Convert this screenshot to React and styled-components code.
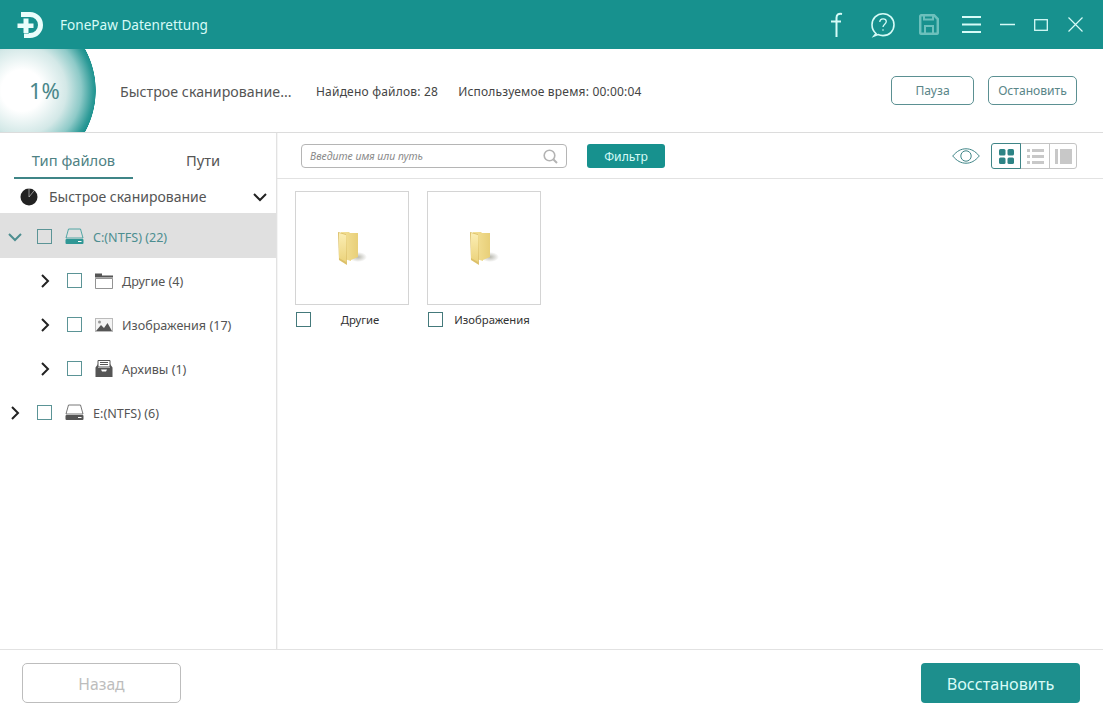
import React from "react";
import styled, { createGlobalStyle } from "styled-components";

const GlobalStyle = createGlobalStyle`
  html, body {
    margin: 0;
    padding: 0;
    background: #fff;
    font-family: "Noto Sans", "Open Sans", sans-serif;
  }
  * { box-sizing: border-box; }
`;

const Window = styled.div`
  width: 1103px;
  height: 723px;
  display: flex;
  flex-direction: column;
  overflow: hidden;
  background: #fff;
`;

const TitleBar = styled.header`
  height: 49px;
  flex: none;
  display: flex;
  align-items: center;
  background: #17918e;
  padding: 0 11px 0 17px;
`;

const AppName = styled.span`
  margin-left: 16px;
  flex: 1;
  color: #d6fbf7;
  font-size: 13.6px;
`;

const Slot = styled.span`
  width: ${(p) => p.$w}px;
  height: 49px;
  display: flex;
  align-items: center;
  justify-content: center;
`;

const StatusBar = styled.section`
  height: 84px;
  flex: none;
  display: flex;
  align-items: center;
  border-bottom: 1px solid #dcdcdc;
`;

const Progress = styled.div`
  width: 97px;
  height: 83px;
  flex: none;
  display: flex;
  align-items: center;
  padding: 0 0 2px 29px;
  color: #4a878a;
  font-size: 22px;
  background:
    radial-gradient(circle 86px at 10px 41.5px, transparent 99.4%, #fff 100%),
    radial-gradient(circle 74px at 22px 41.5px, #fff 0, #fff 28%, #d3e8e7 60%, #8ecac8 80%, #2e9b98 96%, #1f9390 100%);
`;

const ScanTitle = styled.span`
  margin: 2px 0 0 23px;
  width: 196px;
  color: #555;
  font-size: 14.2px;
  letter-spacing: 0.03px;
`;

const Stat = styled.span`
  margin: 2px 20px 0 0;
  color: #444;
  font-size: 12px;
  letter-spacing: 0.2px;
`;

const Spacer = styled.div`
  flex: 1;
`;

const OutlineButton = styled.button`
  width: ${(p) => p.$w}px;
  height: 29px;
  margin-right: ${(p) => p.$mr}px;
  padding: 0;
  background: #fff;
  border: 1px solid #5b9092;
  border-radius: 5px;
  color: #5a8688;
  font: inherit;
  font-size: 12.1px;
`;

const Body = styled.div`
  flex: 1;
  min-height: 0;
  display: flex;
`;

const Sidebar = styled.aside`
  width: 277px;
  flex: none;
  border-right: 1px solid #e2e2e2;
  box-shadow: 1px 0 0 #f5f5f5;
`;

const Tabs = styled.div`
  height: 46px;
  display: flex;
  padding-left: 14px;
`;

const Tab = styled.div`
  width: ${(p) => p.$w}px;
  display: flex;
  align-items: center;
  justify-content: center;
  padding-top: 10px;
  font-size: 14.7px;
  color: ${(p) => (p.$active ? "#4f8284" : "#555")};
  border-bottom: 2px solid ${(p) => (p.$active ? "#3f8587" : "transparent")};
`;

const ScanRow = styled.div`
  height: 34px;
  display: flex;
  align-items: center;
  padding: 1px 8px 0 20px;
  color: #555;
  font-size: 14px;
`;

const ScanLabel = styled.span`
  margin-left: 11px;
  flex: 1;
`;

const TreeRow = styled.div`
  height: ${(p) => p.$h || 44}px;
  display: flex;
  align-items: center;
  padding-top: ${(p) => (p.$selected ? 2 : 1)}px;
  padding-left: ${(p) => 7 + p.$depth * 30}px;
  background: ${(p) => (p.$selected ? "#e0e0e0" : "transparent")};
`;

const TreeLabel = styled.span`
  margin: 2px 0 0 ${(p) => p.$gap}px;
  color: ${(p) => (p.$selected ? "#4d8e90" : "#555")};
  font-size: 12.6px;
`;

const Check = styled.span`
  width: 15px;
  height: 15px;
  flex: none;
  margin: ${(p) => p.$m || "0 13px 0 14px"};
  background: ${(p) => p.$bg || "#fff"};
  border: 1px solid ${(p) => p.$line || "#5b9496"};
`;

const Main = styled.main`
  flex: 1;
  min-width: 0;
  display: flex;
  flex-direction: column;
`;

const Toolbar = styled.div`
  height: 46px;
  flex: none;
  display: flex;
  align-items: center;
  padding: 1px 26px 0 24px;
  border-bottom: 1px solid #e2e2e2;
`;

const Search = styled.div`
  width: 266px;
  height: 24px;
  display: flex;
  align-items: center;
  justify-content: space-between;
  padding: 0 8px;
  border: 1px solid #b5b5b5;
  border-radius: 4px;
  color: #8a8a8a;
  font-size: 10.5px;
  font-style: italic;
`;

const FilterButton = styled.button`
  width: 78px;
  height: 24px;
  margin-left: 20px;
  padding: 0;
  border: none;
  border-radius: 3px;
  background: #17918e;
  color: #d6fbf7;
  font: inherit;
  font-size: 12.2px;
`;

const ViewGroup = styled.div`
  display: flex;
  margin-left: 11px;
  height: 26px;
`;

const ViewButton = styled.span`
  width: ${(p) => p.$w}px;
  display: flex;
  align-items: center;
  justify-content: center;
  border: 1px solid ${(p) => (p.$active ? "#3f8587" : "#c4c4c4")};
  margin-left: ${(p) => (p.$first ? 0 : "-1px")};
  border-radius: ${(p) => p.$radius};
  position: relative;
  z-index: ${(p) => (p.$active ? 1 : 0)};
`;

const Grid = styled.div`
  display: flex;
  gap: 18px;
  padding: 12px 0 0 18px;
`;

const Card = styled.div`
  width: 114px;
`;

const Thumb = styled.div`
  height: 114px;
  display: flex;
  align-items: center;
  justify-content: center;
  border: 1px solid #d4d4d4;
`;

const CardFoot = styled.div`
  display: flex;
  align-items: center;
  margin-top: 7px;
  padding-left: 1px;
`;

const CardName = styled.span`
  flex: 1;
  text-align: center;
  color: #333;
  font-size: 11.3px;
`;

const Footer = styled.footer`
  height: 74px;
  flex: none;
  display: flex;
  align-items: flex-start;
  justify-content: space-between;
  padding: 13px 23px 0 22px;
  border-top: 1px solid #e2e2e2;
`;

const BackButton = styled.button`
  width: 159px;
  height: 40px;
  padding: 2px 0 0;
  background: #fff;
  border: 1px solid #bdbdbd;
  border-radius: 5px;
  color: #bdbdbd;
  font: inherit;
  font-size: 15.7px;
`;

const RestoreButton = styled.button`
  width: 159px;
  height: 40px;
  padding: 2px 0 0;
  background: #1d8f8d;
  border: none;
  border-radius: 4px;
  color: #d8fbf7;
  font: inherit;
  font-size: 16.2px;
`;

const Chevron = ({ open, color = "#222", size = 16 }) => (
  <svg width={size} height={size} viewBox="0 0 16 16" fill="none" stroke={color} strokeWidth="2">
    <path d={open ? "M2 5l6 6 6-6" : "M5 2l6 6-6 6"} />
  </svg>
);

const Logo = () => (
  <svg width="27" height="28" viewBox="0 0 27 28">
    <path d="M4 1h9a13 13 0 0 1 0 26H7v-5h6a8 8 0 0 0 0-16H4z" fill="#eafdfb" />
    <path d="M6 6.500h6v5h5v6h-5v5H6v-5H0v-6h6z" fill="#17918e" />
    <path d="M6.500 7.500h5v5h5v4.500h-5v5h-5v-5H0.500v-4.500h6z" fill="#eafdfb" />
  </svg>
);

const Line = "#d6fbf7";

const FacebookIcon = () => (
  <svg width="14" height="26" viewBox="0 0 14 26" fill="none" stroke={Line} strokeWidth="2">
    <path d="M12 2c-3.500-.7-5.500.6-5.500 3.800V25M1 9.500h10" />
  </svg>
);

const HelpIcon = () => (
  <svg width="24" height="26" viewBox="0 0 24 26" fill="none" stroke={Line} strokeWidth="1.600">
    <path d="M5 21.500C2.500 19.500 1 16.500 1 12.800 1 6.500 5.800 1.800 12 1.800s11 4.700 11 11-4.800 10.800-11 10.800c-2 0-3.700-.4-5-1l-4 1.400z" />
    <path d="M8.800 10c0-1.900 1.400-3.200 3.300-3.200s3.200 1.200 3.200 2.800c0 2.500-3.300 2.700-3.300 5.400" strokeWidth="1.300" />
    <circle cx="12" cy="18" r="0.800" fill={Line} stroke="none" />
  </svg>
);

const SaveIcon = () => (
  <svg width="20" height="21" viewBox="0 0 20 21" fill="none" stroke="#6cc0bc" strokeWidth="2.500">
    <path d="M1.200 2.500A1.300 1.300 0 0 1 2.500 1.200H15l3.800 3.800v13.500a1.300 1.300 0 0 1-1.300 1.300h-15a1.300 1.300 0 0 1-1.300-1.300z" />
    <path d="M5 1v4.500h9V1" strokeWidth="2" />
    <path d="M6 20v-8h8v8" strokeWidth="2" />
  </svg>
);

const MenuIcon = () => (
  <svg width="19" height="19" viewBox="0 0 19 19" stroke={Line} strokeWidth="2">
    <path d="M0 2h19M0 9.500h19M0 17h19" />
  </svg>
);

const MinIcon = () => (
  <svg width="15" height="3" viewBox="0 0 15 3" stroke={Line} strokeWidth="1.500">
    <path d="M0 1.500h15" />
  </svg>
);

const MaxIcon = () => (
  <svg width="14" height="12" viewBox="0 0 14 12" fill="none" stroke={Line} strokeWidth="1.300">
    <rect x="0.700" y="0.700" width="12.600" height="10.600" />
  </svg>
);

const CloseIcon = () => (
  <svg width="15" height="15" viewBox="0 0 15 15" stroke={Line} strokeWidth="1.200">
    <path d="M0.500 0.500l14 14M14.500 0.500l-14 14" />
  </svg>
);

const PieIcon = () => (
  <svg width="18" height="18" viewBox="0 0 18 18">
    <circle cx="9" cy="9" r="8.500" fill="#222" />
    <path d="M9 9V0M9 9l5.500-6.800" stroke="#fff" strokeWidth="0.500" fill="none" />
  </svg>
);

const DriveIcon = ({ color }) => (
  <svg width="19" height="17" viewBox="0 0 19 17">
    <path d="M3.500 1h12l2.500 9H1z" fill="none" stroke={color} strokeWidth="0.800" />
    <rect x="0.500" y="11" width="18" height="5" rx="1" fill={color} />
    <rect x="13" y="13" width="3.500" height="1" fill="#fff" />
  </svg>
);

const FolderOutline = () => (
  <svg width="18" height="16" viewBox="0 0 18 16" fill="none" stroke="#777" strokeWidth="0.800">
    <path d="M0.500 5.500h17v10H0.500z" />
    <path d="M0 0.500h7v2h11v2H0z" fill="#555" stroke="none" />
  </svg>
);

const ImageIcon = () => (
  <svg width="18" height="14" viewBox="0 0 18 14">
    <rect x="0.500" y="0.500" width="17" height="13" fill="#f4f4f4" stroke="#bbb" />
    <path d="M1 13l5-6 3 3 3.500-5L17 13z" fill="#555" />
    <circle cx="4.500" cy="4" r="1.500" fill="#999" />
  </svg>
);

const ArchiveIcon = () => (
  <svg width="18" height="17" viewBox="0 0 18 17">
    <path d="M3 0.500h12V7H3z" fill="#fff" stroke="#555" />
    <path d="M5 2.500h8M5 4.500h8" stroke="#555" />
    <path d="M0.500 7.500L3 4v4h12V4l2.500 3.500V17H0.500z" fill="#555" />
    <path d="M6 9.500h6l-1 2H7z" fill="#fff" />
  </svg>
);

const SearchIcon = () => (
  <svg width="15" height="15" viewBox="0 0 15 15" fill="none" stroke="#b3b3b3" strokeWidth="1.600">
    <circle cx="6.500" cy="6.500" r="5.300" />
    <path d="M10.500 10.500l3.500 3.500" strokeWidth="2" />
  </svg>
);

const EyeIcon = () => (
  <svg width="28" height="16" viewBox="0 0 28 16" fill="none" stroke="#3f8587">
    <path d="M0.700 8C5 3 9 0.800 14 0.800S23 3 27.300 8C23 13 19 15.200 14 15.200S5 13 0.700 8z" />
    <circle cx="14" cy="8" r="5.200" />
  </svg>
);

const TilesIcon = () => (
  <svg width="15" height="15" viewBox="0 0 15 15" fill="#2c8385">
    <rect width="6.500" height="6.500" rx="1.500" />
    <rect x="8.500" width="6.500" height="6.500" rx="1.500" />
    <rect y="8.500" width="6.500" height="6.500" rx="1.500" />
    <rect x="8.500" y="8.500" width="6.500" height="6.500" rx="1.500" />
  </svg>
);

const ListIcon = () => (
  <svg width="17" height="15" viewBox="0 0 17 15" fill="#c8c8c8">
    <rect width="3" height="3" />
    <rect x="5" width="12" height="3" />
    <rect y="6" width="3" height="3" />
    <rect x="5" y="6" width="12" height="3" />
    <rect y="12" width="3" height="3" />
    <rect x="5" y="12" width="12" height="3" />
  </svg>
);

const ColumnsIcon = () => (
  <svg width="17" height="15" viewBox="0 0 17 15" fill="#c8c8c8">
    <rect width="3" height="15" />
    <rect x="5" width="12" height="15" />
  </svg>
);

const FolderIcon = ({ id }) => (
  <svg width="30" height="34" viewBox="0 0 30 34">
    <defs>
      <linearGradient id={`${id}-back`} x1="0" y1="0" x2="1" y2="0">
        <stop offset="0" stopColor="#f5e29a" />
        <stop offset="1" stopColor="#e8cf78" />
      </linearGradient>
      <linearGradient id={`${id}-front`} x1="0" y1="0" x2="0" y2="1">
        <stop offset="0" stopColor="#fbeeb4" />
        <stop offset="1" stopColor="#ecd37c" />
      </linearGradient>
      <radialGradient id={`${id}-shadow`}>
        <stop offset="0" stopColor="#b9b9b0" />
        <stop offset="1" stopColor="#fff" />
      </radialGradient>
    </defs>
    <ellipse cx="21" cy="26" rx="9" ry="5" fill={`url(#${id}-shadow)`} />
    <path d="M4 1h8l1 1h8v24l-7 3V30L4 27z" fill={`url(#${id}-back)`} />
    <path d="M1 1l8 2 1 31-8-5z" fill="#dcc069" />
    <path d="M2 2l7 2v27l-7-4z" fill={`url(#${id}-front)`} />
  </svg>
);

const tree = [
  { label: "Другие (4)", depth: 1, Icon: FolderOutline },
  { label: "Изображения (17)", depth: 1, Icon: ImageIcon },
  { label: "Архивы (1)", depth: 1, Icon: ArchiveIcon },
];

const App = () => {
  return (
    <Window>
      <GlobalStyle />
      <TitleBar>
        <Logo />
        <AppName>FonePaw Datenrettung</AppName>
        <Slot $w={46}><FacebookIcon /></Slot>
        <Slot $w={46}><HelpIcon /></Slot>
        <Slot $w={46}><SaveIcon /></Slot>
        <Slot $w={38}><MenuIcon /></Slot>
        <Slot $w={34}><MinIcon /></Slot>
        <Slot $w={34}><MaxIcon /></Slot>
        <Slot $w={34}><CloseIcon /></Slot>
      </TitleBar>

      <StatusBar>
        <Progress>1%</Progress>
        <ScanTitle>Быстрое сканирование...</ScanTitle>
        <Stat>Найдено файлов: 28</Stat>
        <Stat>Используемое время: 00:00:04</Stat>
        <Spacer />
        <OutlineButton $w={83} $mr={14}>Пауза</OutlineButton>
        <OutlineButton $w={89} $mr={26}>Остановить</OutlineButton>
      </StatusBar>

      <Body>
        <Sidebar>
          <Tabs>
            <Tab $w={119} $active>Тип файлов</Tab>
            <Tab $w={140}>Пути</Tab>
          </Tabs>
          <ScanRow>
            <PieIcon />
            <ScanLabel>Быстрое сканирование</ScanLabel>
            <Chevron open />
          </ScanRow>
          <TreeRow $depth={0} $selected $h={45}>
            <Chevron open color="#4d8e90" />
            <Check $bg="transparent" />
            <DriveIcon color="#2f9795" />
            <TreeLabel $selected $gap={9}>C:(NTFS) (22)</TreeLabel>
          </TreeRow>
          {tree.map(({ label, depth, Icon }) => (
            <TreeRow key={label} $depth={depth}>
              <Chevron />
              <Check />
              <Icon />
              <TreeLabel $gap={9}>{label}</TreeLabel>
            </TreeRow>
          ))}
          <TreeRow $depth={0}>
            <Chevron />
            <Check />
            <DriveIcon color="#555" />
            <TreeLabel $gap={9}>E:(NTFS) (6)</TreeLabel>
          </TreeRow>
        </Sidebar>

        <Main>
          <Toolbar>
            <Search>
              Введите имя или путь
              <SearchIcon />
            </Search>
            <FilterButton>Фильтр</FilterButton>
            <Spacer />
            <EyeIcon />
            <ViewGroup>
              <ViewButton $w={30} $first $active $radius="3px 0 0 3px"><TilesIcon /></ViewButton>
              <ViewButton $w={30} $radius="0"><ListIcon /></ViewButton>
              <ViewButton $w={28} $radius="0 3px 3px 0"><ColumnsIcon /></ViewButton>
            </ViewGroup>
          </Toolbar>
          <Grid>
            <Card>
              <Thumb><FolderIcon id="f1" /></Thumb>
              <CardFoot>
                <Check $m="0" $line="#44797b" />
                <CardName>Другие</CardName>
              </CardFoot>
            </Card>
            <Card>
              <Thumb><FolderIcon id="f2" /></Thumb>
              <CardFoot>
                <Check $m="0" $line="#44797b" />
                <CardName>Изображения</CardName>
              </CardFoot>
            </Card>
          </Grid>
        </Main>
      </Body>

      <Footer>
        <BackButton>Назад</BackButton>
        <RestoreButton>Восстановить</RestoreButton>
      </Footer>
    </Window>
  );
};

export default App;
